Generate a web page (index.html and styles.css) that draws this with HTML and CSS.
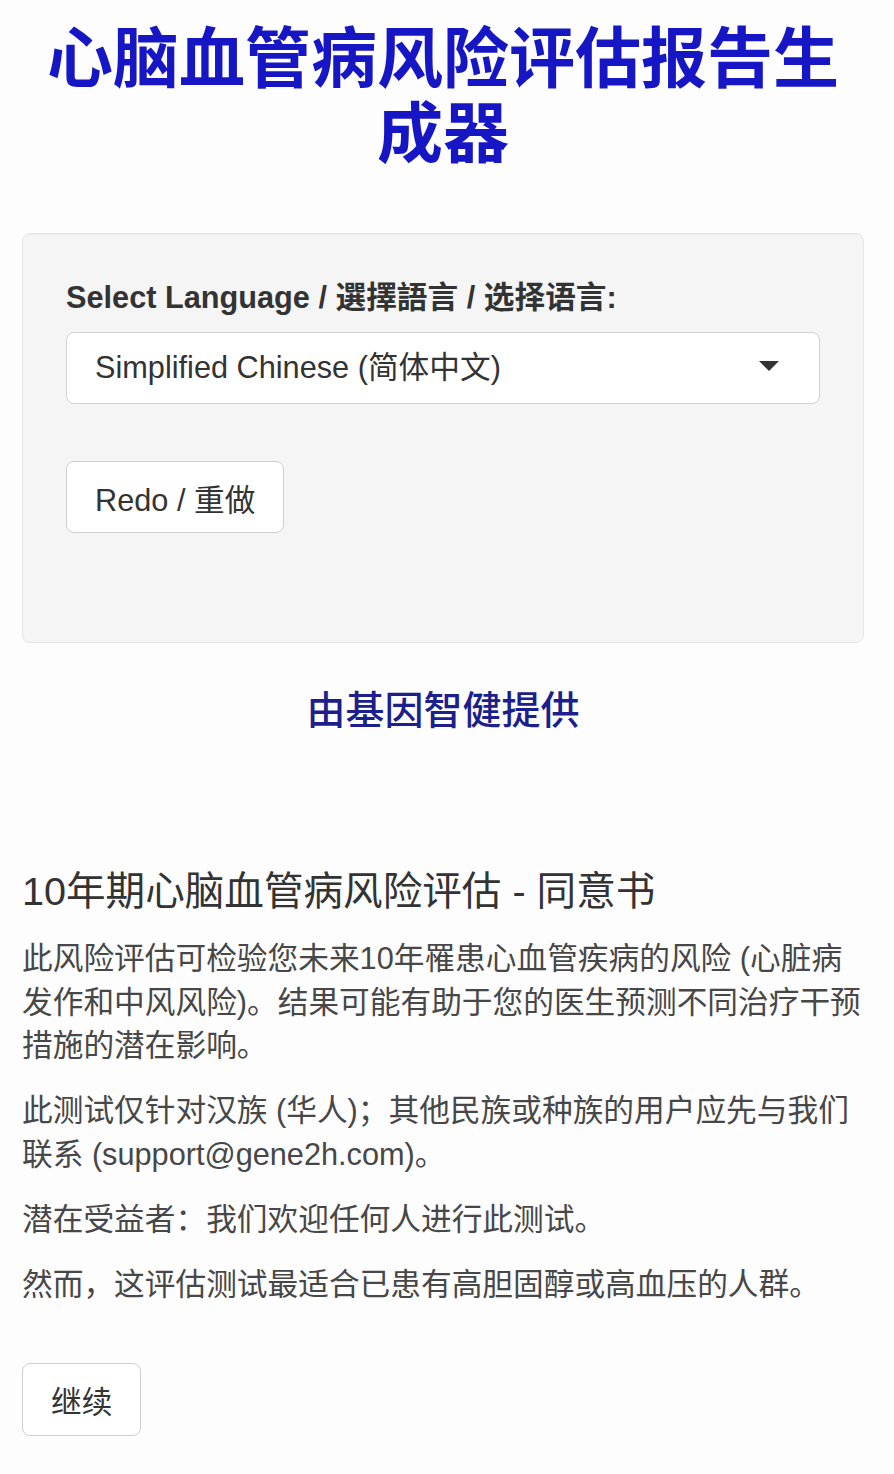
FILE: index.html
```html
<!DOCTYPE html>
<html lang="zh">
<head>
<meta charset="utf-8">
<title>心脑血管病风险评估报告生成器</title>
<link rel="stylesheet" href="styles.css">
</head>
<body>
<div class="page">
  <h1 class="title">心脑血管病风险评估报告生成器</h1>

  <div class="well">
    <label class="field-label" for="lang">Select Language / 選擇語言 / 选择语言:</label>
    <div class="select" id="lang">
      <span class="select-text">Simplified Chinese (简体中文)</span>
      <span class="caret"></span>
    </div>
    <button class="btn redo">Redo / 重做</button>
  </div>

  <h2 class="provider">由基因智健提供</h2>

  <h4 class="consent-title">10年期心脑血管病风险评估 - 同意书</h4>
  <p>此风险评估可检验您未来10年罹患心血管疾病的风险 (心脏病发作和中风风险)。结果可能有助于您的医生预测不同治疗干预措施的潜在影响。</p>
  <p>此测试仅针对汉族 (华人)；其他民族或种族的用户应先与我们联系 (support@gene2h.com)。</p>
  <p>潜在受益者：我们欢迎任何人进行此测试。</p>
  <p>然而，这评估测试最适合已患有高胆固醇或高血压的人群。</p>

  <button class="btn continue">继续</button>
</div>
</body>
</html>
```

FILE: styles.css
```css
html, body {
  margin: 0;
  padding: 0;
  background: #fdfdfe;
}

body {
  font-family: "Liberation Sans", "Noto Sans CJK SC", sans-serif;
  font-size: 30.7px;
  line-height: 43.5px;
  color: #474747;
}

.page {
  padding: 0 30px 40px 22px;
}

.title {
  margin: 22px 0 0;
  font-size: 66px;
  line-height: 75px;
  font-weight: 700;
  text-align: center;
  color: #1616c4;
}

.well {
  margin-top: 61px;
  background: #f5f5f6;
  border: 1px solid #e6e6e8;
  border-radius: 8px;
  padding: 44px 43px 109px;
  box-shadow: inset 0 1px 1px rgba(0,0,0,0.03);
}

.field-label {
  display: block;
  font-weight: 700;
  color: #333;
  line-height: 40px;
  margin-bottom: 14px;
}

.select {
  display: flex;
  align-items: center;
  justify-content: space-between;
  box-sizing: border-box;
  height: 72px;
  background: #fff;
  border: 1px solid #d2d2d4;
  border-radius: 8px;
  padding: 0 40px 0 28px;
  color: #333;
}

.caret {
  width: 0;
  height: 0;
  border-left: 10px solid transparent;
  border-right: 10px solid transparent;
  border-top: 10px solid #333;
  margin-top: -4px;
}

.btn {
  display: block;
  box-sizing: border-box;
  height: 72px;
  padding: 0 28px;
  background: #fff;
  border: 1px solid #cfcfd2;
  border-radius: 8px;
  font-family: inherit;
  font-size: 30.7px;
  color: #333;
}

.redo {
  margin-top: 57px;
}

.provider {
  margin: 40px 0 0;
  font-size: 39px;
  line-height: 56px;
  font-weight: 500;
  text-align: center;
  color: #1c1f8c;
}

.consent-title {
  margin: 130px 0 24px;
  font-size: 39.6px;
  line-height: 44px;
  font-weight: 400;
  color: #333;
}

p {
  margin: 0 0 21.5px;
}

.continue {
  margin-top: 57px;
  height: 73px;
}
```
